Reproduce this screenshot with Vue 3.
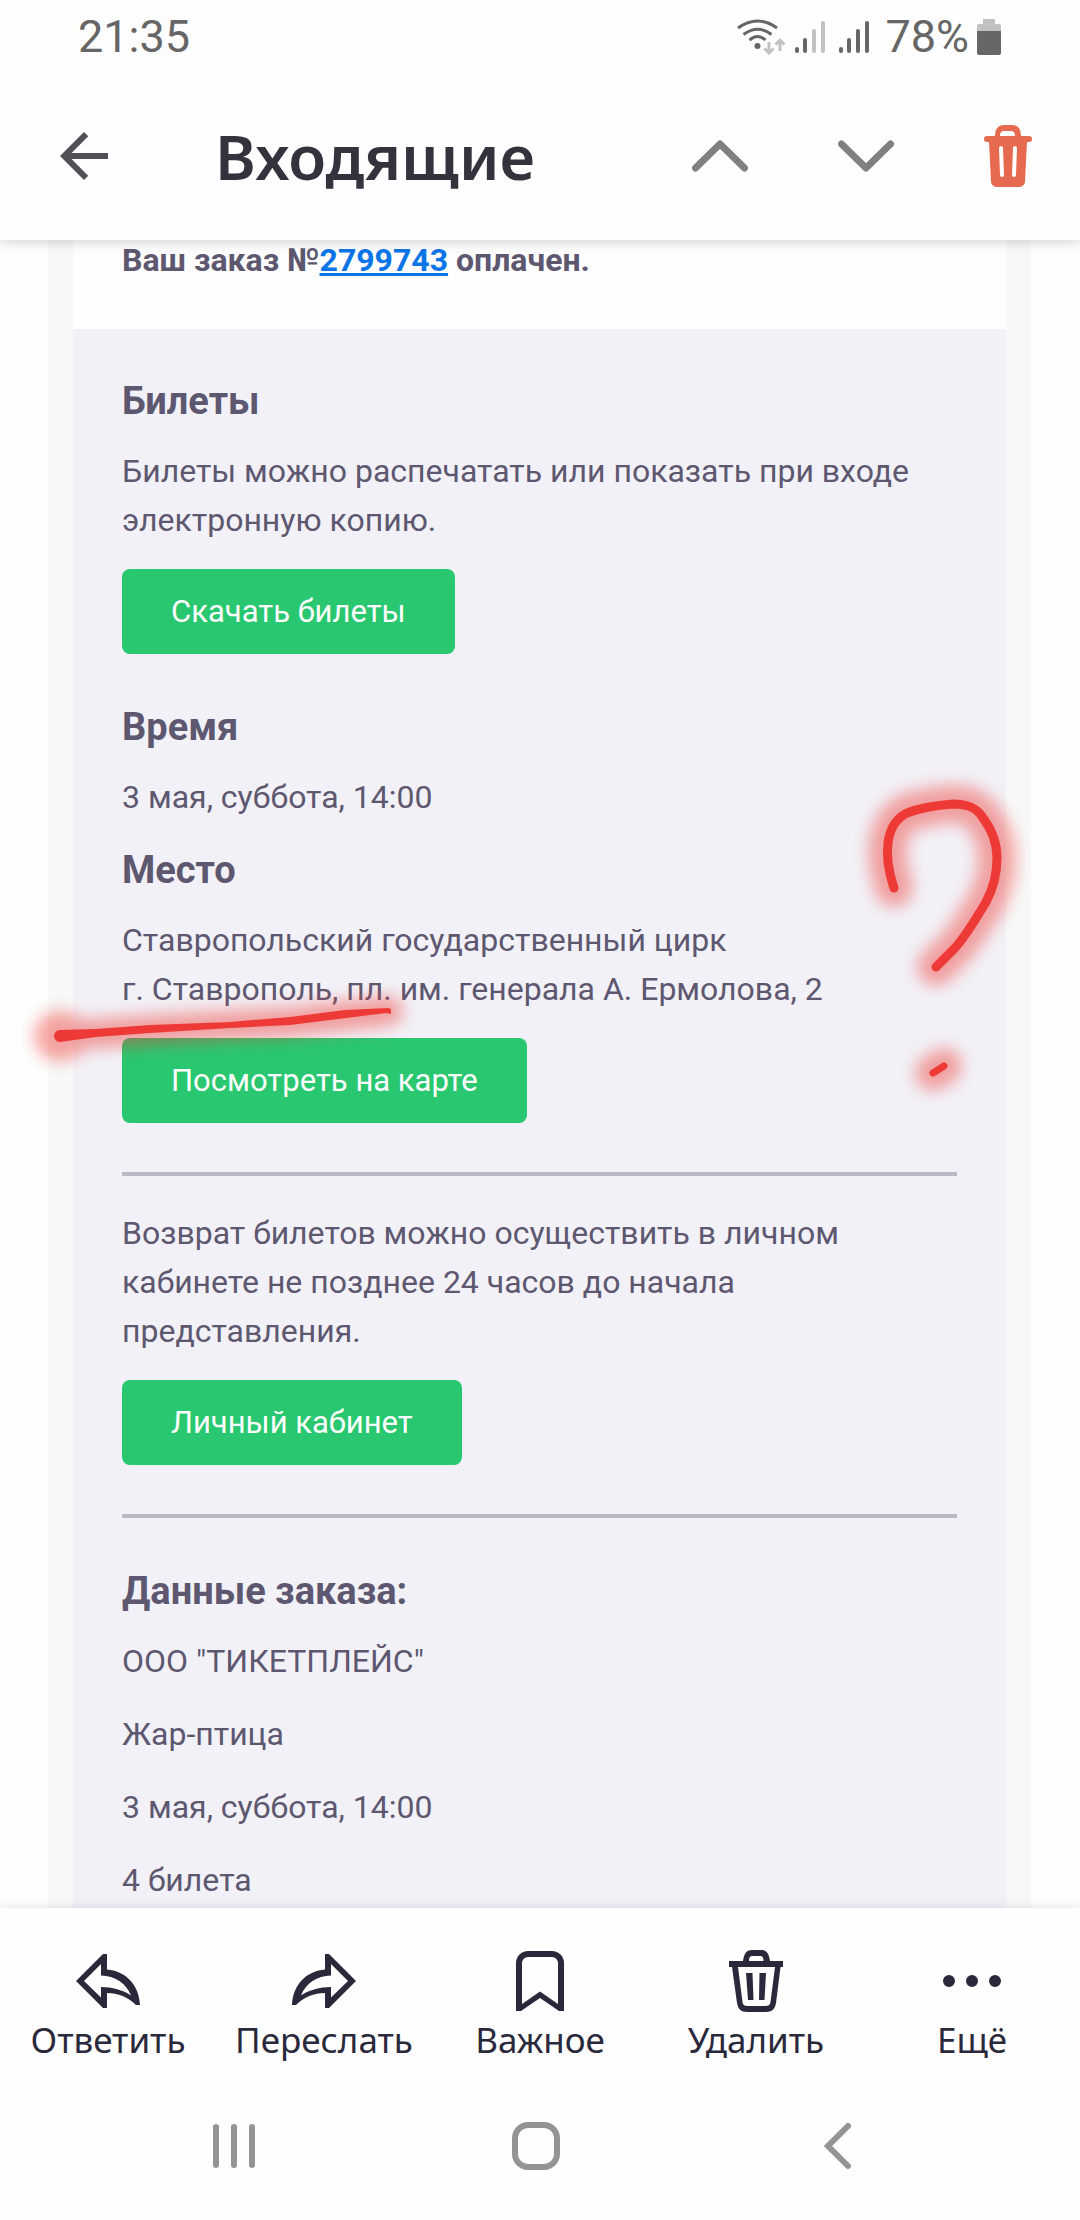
<template>
    <div class="screen">
        <header class="top">
            <div class="status">
                <span class="clock">21:35</span>
                <div class="status-icons">
                    <svg class="wifi" viewBox="0 0 50 36" aria-hidden="true">
                        <g fill="none" stroke="#666" stroke-width="3">
                            <path d="M1 9Q20.500-5 40 9" />
                            <path d="M6.500 15.500Q20.500 5 34.500 15.500" />
                            <path d="M12.500 21Q20.500 14 28.500 21" />
                        </g>
                        <circle cx="20.500" cy="27" r="3" fill="#666" />
                        <g fill="none" stroke="#c2c2c2" stroke-width="3">
                            <path d="M32 23v10M27.500 29.500l4.500 4.500 4.500-4.500" />
                            <path d="M43 32V22M38.500 25.500l4.500-4.500 4.500 4.500" />
                        </g>
                    </svg>
                    <svg
                        v-for="(level, index) in signals"
                        :key="index"
                        class="signal"
                        viewBox="0 0 32 36"
                        aria-hidden="true"
                    >
                        <path
                            v-for="(bar, i) in bars"
                            :key="i"
                            :d="bar"
                            :stroke="i < level ? '#666' : '#c2c2c2'"
                            stroke-width="4"
                            stroke-linecap="round"
                        />
                    </svg>
                    <span class="percent">78%</span>
                    <svg class="battery" viewBox="0 0 24 36" aria-hidden="true">
                        <path fill="#c2c2c2" d="M6 0h12v5h4a2 2 0 0 1 2 2v5H0V7a2 2 0 0 1 2-2h4z" />
                        <path fill="#666" d="M0 12h24v22a2 2 0 0 1-2 2H2a2 2 0 0 1-2-2z" />
                    </svg>
                </div>
            </div>
            <div class="bar">
                <button class="icon-button back" aria-label="Назад">
                    <svg viewBox="0 0 48 48" fill="#505056">
                        <path d="M48 21H11.500l16.800-16.800L24 0 0 24l24 24 4.200-4.200L11.500 27H48z" />
                    </svg>
                </button>
                <h1>Входящие</h1>
                <div class="actions">
                    <button class="icon-button" aria-label="Предыдущее">
                        <svg class="chevron" viewBox="0 0 56 32">
                            <path d="M3.500 28 28 4 52.500 28" />
                        </svg>
                    </button>
                    <button class="icon-button" aria-label="Следующее">
                        <svg class="chevron" viewBox="0 0 56 32">
                            <path d="M3.500 4 28 28 52.500 4" />
                        </svg>
                    </button>
                    <button class="icon-button" aria-label="Удалить письмо">
                        <svg class="trash" viewBox="0 0 48 62" fill="#e66a50">
                            <path
                                fill-rule="evenodd"
                                d="M11 11C11 4 14 0 20 0h8c6 0 9 4 9 11h8a3 3 0 0 1 0 6h-2l-2 39c0 4-3 6-7 6H14c-4 0-7-2-7-6L5 17H3a3 3 0 0 1 0-6zm5 0h15c0-4-2-5-4-5h-7c-2 0-4 1-4 5zM15 23l1 27c0 2.500 4 2.500 4 0l-1-27c0-2.500-4-2.500-4 0zm14 0-1 27c0 2.500 4 2.500 4 0l1-27c0-2.500-4-2.500-4 0z"
                            />
                        </svg>
                    </button>
                </div>
            </div>
        </header>

        <main class="mail">
            <div class="letter">
                <p class="intro">
                    Ваш заказ №<a href="#order">2799743</a> оплачен.
                </p>
                <div class="body">
                    <h2>Билеты</h2>
                    <p>Билеты можно распечатать или показать при входе электронную копию.</p>
                    <a class="btn" href="#tickets">Скачать билеты</a>

                    <h2>Время</h2>
                    <p>3 мая, суббота, 14:00</p>

                    <h2>Место</h2>
                    <p>
                        Ставропольский государственный цирк<br />
                        г. Ставрополь, пл. им. генерала А. Ермолова, 2
                    </p>
                    <a class="btn" href="#map">Посмотреть на карте</a>

                    <hr />

                    <p>Возврат билетов можно осуществить в личном кабинете не позднее 24 часов до начала представления.</p>
                    <a class="btn" href="#account">Личный кабинет</a>

                    <hr />

                    <h2 class="order-title">Данные заказа:</h2>
                    <p v-for="line in order" :key="line">{{ line }}</p>
                </div>
            </div>

            <!-- Red marker strokes over the letter -->
            <svg class="marker" viewBox="0 240 1080 1668" preserveAspectRatio="xMidYMin meet" aria-hidden="true">
                <defs>
                    <filter id="glow" x="-30%" y="-100%" width="160%" height="300%">
                        <feGaussianBlur stdDeviation="8" />
                    </filter>
                </defs>
                <g filter="url(#glow)" fill="none" stroke="#ee3a36" stroke-linecap="round" opacity="0.45">
                    <path stroke-width="30" d="M62 1036 160 1029 290 1022 388 1011" />
                    <path stroke-width="50" d="M59 1036h3" />
                    <path stroke-width="38" :d="hook" />
                    <path stroke-width="36" d="M933 1073 944 1066" />
                </g>
                <g fill="none" stroke="#ee3a36" stroke-linecap="round">
                    <path
                        fill="#ee3a36"
                        stroke="none"
                        d="M60 1030 96 1029 150 1025 230 1022 290 1017 345 1010 388 1008 391 1009V1014L386 1013 330 1020 290 1025 230 1028 150 1033 96 1037 60 1042A6 6 0 0 1 60 1030Z"
                    />
                    <path stroke-width="9" :d="hook" />
                    <path stroke-width="7" d="M933 1073 944 1066" />
                </g>
            </svg>
        </main>

        <nav class="toolbar">
            <button v-for="item in tools" :key="item.label" class="tool">
                <svg
                    :viewBox="`0 0 ${item.width} ${item.height}`"
                    :width="item.width"
                    :height="item.height"
                    fill="#2a293b"
                    fill-rule="evenodd"
                    aria-hidden="true"
                >
                    <path :d="item.path" />
                </svg>
                <span>{{ item.label }}</span>
            </button>
        </nav>

        <div class="system">
            <button class="icon-button" aria-label="Недавние">
                <svg width="48" height="48" viewBox="0 0 48 48">
                    <path d="M6 5v38M24 5v38M42 5v38" />
                </svg>
            </button>
            <button class="icon-button" aria-label="Главный экран">
                <svg width="48" height="48" viewBox="0 0 48 48">
                    <rect x="3" y="3" width="42" height="42" rx="13" />
                </svg>
            </button>
            <button class="icon-button" aria-label="Назад в системе">
                <svg width="48" height="48" viewBox="0 0 48 48">
                    <path d="M34 4 14 24l20 20" />
                </svg>
            </button>
        </div>
    </div>
</template>

<script setup>
import { ref } from "vue";

// Number of lit bars for each SIM card
const signals = ref([2, 4]);
const bars = ["M4 30v2", "M12 21v11", "M21 12v20", "M30 4v28"];

const order = ref(['ООО "ТИКЕТПЛЕЙС"', "Жар-птица", "3 мая, суббота, 14:00", "4 билета"]);

const hook =
    "M894 888C889 873 886 858 888 843C890 827 897 818 907 813C920 808 940 805 953 804C968 804 977 808 983 818C992 830 997 842 997 858C997 872 993 889 986 902C973 924 963 940 953 950L936 967";

const tools = [
    {
        label: "Ответить",
        width: 64,
        height: 54,
        path: "M0 27 27 0h4v15.500C49 17 63 30 64 51h-4C52 43 42 39 31 39v15h-4zM8 27l17 16.500V33c11 0 22 3 30 8.500C50 29 39 22 25 21.500V10z",
    },
    {
        label: "Переслать",
        width: 64,
        height: 54,
        path: "M64 27 37 0h-4v15.500C15 17 1 30 0 51h4C12 43 22 39 33 39v15h4zM56 27 39 43.500V33c-11 0-22 3-30 8.500C14 29 25 22 39 21.500V10z",
    },
    {
        label: "Важное",
        width: 48,
        height: 60,
        path: "M0 60V12A12 12 0 0 1 12 0h24a12 12 0 0 1 12 12v48h-5L24 47 5 60zM6 53V12a6 6 0 0 1 6-6h24a6 6 0 0 1 6 6v41L24 40.500z",
    },
    {
        label: "Удалить",
        width: 54,
        height: 62,
        path: "M14 11C15 3 18 0 23 0h9c5 0 8 3 9 11h13v6h-2.500l-4.500 36c-1 6-4 9-10 9H18c-6 0-9-3-10-9L3 17H0v-6zM20 11h14.500c0-4-1-5-4-5h-6.500c-3 0-4 1-4 5zM9 17l4.500 35c.5 3 2 4 5 4h18c3 0 4.500-1 5-4L46 17zM17 23h6.500l1 27H19zM30.500 23H37l-1.500 27H30z",
    },
    {
        label: "Ещё",
        width: 58,
        height: 12,
        path: "M0 6a6 6 0 0 1 12 0a6 6 0 0 1-12 0zM23 6a6 6 0 0 1 12 0a6 6 0 0 1-12 0zM46 6a6 6 0 0 1 12 0a6 6 0 0 1-12 0z",
    },
];
</script>

<style>
body {
    background: #fefefe;
}
</style>

<style scoped>
.screen {
    display: flex;
    flex-direction: column;
    height: 100vh;
    font-family: Roboto, sans-serif;
    background: #fefefe;
}

button {
    padding: 0;
    border: 0;
    background: none;
    color: inherit;
    font: inherit;
}

svg {
    display: block;
}

.top {
    position: relative;
    z-index: 2;
    flex: none;
    background: #fefefe;
    box-shadow: 0 2px 12px rgba(0, 0, 0, 0.18);
}

.status {
    display: flex;
    align-items: center;
    justify-content: space-between;
    height: 72px;
    padding: 2px 79px 0 78px;
    box-sizing: border-box;
    color: #666;
    font-size: 45px;
    line-height: 54px;
}

.status-icons {
    display: flex;
    align-items: center;
}

.wifi {
    width: 50px;
    height: 36px;
    margin-right: 6px;
}

.signal {
    width: 32px;
    height: 36px;
    margin-right: 12px;
}

.percent {
    margin-right: 8px;
    margin-left: 4px;
}

.battery {
    width: 24px;
    height: 36px;
}

.bar {
    display: flex;
    align-items: center;
    height: 168px;
    padding: 0 48px 0 60px;
    box-sizing: border-box;
}

.icon-button {
    display: flex;
    align-items: center;
    justify-content: center;
}

.back svg {
    width: 48px;
    height: 48px;
}

h1 {
    flex: 1;
    margin: 0 0 0 107px;
    color: #33323d;
    font-family: "Noto Sans", sans-serif;
    font-size: 62px;
    font-weight: 600;
    line-height: 80px;
}

.actions {
    display: flex;
    align-items: center;
    gap: 90px;
}

.chevron {
    width: 56px;
    height: 32px;
    fill: none;
    stroke: #808080;
    stroke-width: 7;
    stroke-linecap: round;
    stroke-linejoin: round;
}

.trash {
    width: 48px;
    height: 62px;
}

.mail {
    position: relative;
    flex: 1;
    min-height: 0;
    overflow: hidden;
}

.letter {
    margin: 0 49px 0 48px;
    padding: 0 25px;
    background: #f8f8f8;
    color: #5d5870;
    font-size: 32px;
    line-height: 49px;
}

.intro {
    margin: 0;
    padding: 0 49px 48px;
    background: #fefefe;
    font-weight: 700;
    line-height: 41px;
}

.intro a {
    color: #0b75e8;
}

.body {
    padding: 48px 49px;
    background: #f2f1f7;
}

h2 {
    margin: 0 0 21px;
    font-size: 38px;
    font-weight: 700;
    line-height: 49px;
}

.body p {
    margin: 0 0 24px;
}

.btn {
    display: block;
    width: fit-content;
    margin-bottom: 49px;
    padding: 0 49px;
    border-radius: 8px;
    background: #29c770;
    color: #fff;
    font-size: 31px;
    line-height: 85px;
    text-decoration: none;
}

hr {
    height: 4px;
    margin: 0 0 33px;
    border: 0;
    background: #bab8c4;
}

.order-title {
    margin-top: 49px;
}

.marker {
    position: absolute;
    top: 0;
    left: 0;
    width: 100%;
    pointer-events: none;
}

.toolbar {
    position: relative;
    z-index: 2;
    display: grid;
    flex: none;
    grid-template-columns: repeat(5, 1fr);
    padding: 41px 0 27px;
    background: #fefefe;
    box-shadow: 0 0 12px rgba(0, 0, 0, 0.12);
    color: #2a293b;
    font-family: "Noto Sans", sans-serif;
    font-size: 35px;
    line-height: 44px;
}

.tool {
    display: grid;
    grid-template-rows: 64px 44px;
    gap: 5px;
    align-items: center;
    justify-items: center;
}

.system {
    position: relative;
    z-index: 3;
    display: grid;
    flex: none;
    grid-template-columns: repeat(3, 1fr);
    align-items: center;
    height: 131px;
    padding: 0 91px 18px 83px;
    box-sizing: border-box;
    background: #fefefe;
}

.system svg {
    fill: none;
    stroke: #949494;
    stroke-width: 6;
    stroke-linecap: round;
}
</style>
